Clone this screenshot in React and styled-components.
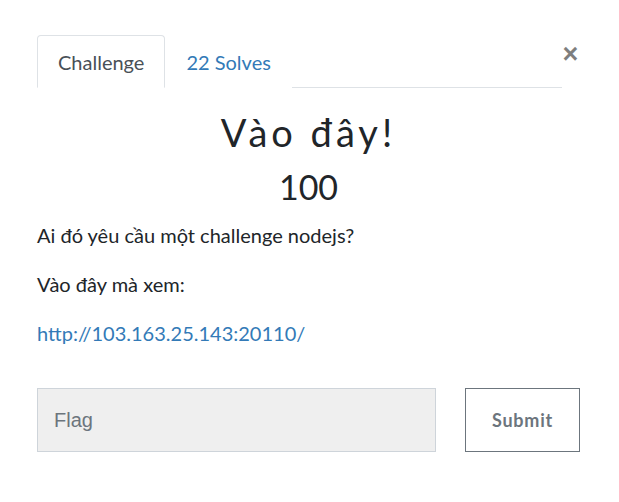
import React from "react";
import styled, { createGlobalStyle } from "styled-components";

const Global = createGlobalStyle`
  html, body { margin: 0; padding: 0; background: #fff; }
  body { font-family: Lato, "Noto Sans", sans-serif; color: #212529; }
  * { box-sizing: border-box; }
`;

const Modal = styled.div`
  width: 619px;
  padding: 35px 39px 40px 37px;
`;

const Header = styled.div`
  display: flex;
  align-items: flex-start;
  margin-right: 1px;
`;

const Tabs = styled.nav`
  flex: 1;
  display: flex;
  border-bottom: 1px solid #dee2e6;
`;

const Tab = styled.a`
  display: block;
  padding: 11px 20px 10px;
  font-size: 20px;
  line-height: 30px;
  margin-bottom: -1px;
  border: 1px solid ${(p) => (p.$active ? "#dee2e6" : "transparent")};
  border-bottom-color: ${(p) => (p.$active ? "#fff" : "transparent")};
  border-radius: 4px 4px 0 0;
  background: #fff;
  color: ${(p) => (p.$active ? "#495057" : "#337ab7")};
  text-decoration: none;
  cursor: pointer;
`;

const Close = styled.button`
  border: 0;
  background: none;
  padding: 0;
  margin-top: 6px;
  width: 17px;
  font-family: "Liberation Sans", Arial, sans-serif;
  font-size: 27px;
  font-weight: 700;
  line-height: 1;
  color: #000;
  opacity: 0.5;
  cursor: pointer;
`;

const Title = styled.h2`
  margin: 17px 0 0;
  text-align: center;
  font-weight: 400;
  font-size: 38px;
  line-height: 54px;
  letter-spacing: 4px;
`;

const Value = styled.h3`
  margin: 5px 0 0;
  text-align: center;
  font-weight: 400;
  font-size: 34px;
  line-height: 46px;
`;

const Desc = styled.div`
  margin-top: 10px;
  font-size: 20px;
  line-height: 30px;
  p { margin: 0 0 19px; }
  a { color: #337ab7; text-decoration: none; }
`;

const Form = styled.form`
  display: flex;
  gap: 29px;
  margin-top: 40px;
`;

const FlagInput = styled.input`
  flex: none;
  width: 399px;
  height: 64px;
  padding: 0 16px;
  background: #efefef;
  border: 1px solid #ced4da;
  border-radius: 0;
  font-family: "Liberation Sans", Arial, sans-serif;
  font-size: 20px;
  color: #495057;
  outline: none;
  &::placeholder { color: #6c757d; }
`;

const SubmitButton = styled.button`
  flex: none;
  width: 115px;
  height: 64px;
  background: #fff;
  border: 1px solid #6c757d;
  border-radius: 0;
  font-family: Lato, sans-serif;
  font-weight: 700;
  font-size: 18px;
  letter-spacing: 0.8px;
  color: #6c757d;
  cursor: pointer;
`;

export default function App() {
  return (
    <>
      <Global />
      <Modal>
        <Header>
          <Tabs>
            <Tab $active>Challenge</Tab>
            <Tab>22 Solves</Tab>
          </Tabs>
          <Close aria-label="Close">×</Close>
        </Header>
        <Title>Vào đây!</Title>
        <Value>100</Value>
        <Desc>
          <p>Ai đó yêu cầu một challenge nodejs?</p>
          <p>Vào đây mà xem:</p>
          <p><a href="#">http://103.163.25.143:20110/</a></p>
        </Desc>
        <Form onSubmit={(e) => e.preventDefault()}>
          <FlagInput placeholder="Flag" />
          <SubmitButton type="submit">Submit</SubmitButton>
        </Form>
      </Modal>
    </>
  );
}
